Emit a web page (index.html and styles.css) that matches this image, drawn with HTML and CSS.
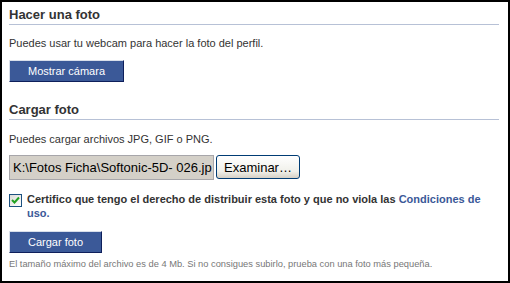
FILE: index.html
```html
<!DOCTYPE html>
<html lang="es">

<head>
	<title>Foto del perfil</title>
	<meta charset="utf-8"/>
	<link rel="stylesheet" href="styles.css">
</head>

<body>
	<div class="panel">
		<div class="section">
			<h2 class="section-title">Hacer una foto</h2>
			<p class="hint">Puedes usar tu webcam para hacer la foto del perfil.</p>
			<button class="fb-button">Mostrar cámara</button>
		</div>

		<div class="section upload">
			<h2 class="section-title">Cargar foto</h2>
			<p class="hint">Puedes cargar archivos JPG, GIF o PNG.</p>
			<div class="file-row">
				<span class="file-path">K:\Fotos Ficha\Softonic-5D- 026.jp</span>
				<button class="browse">Examinar…</button>
			</div>
			<label class="certify">
				<span class="checkbox">
					<svg width="9" height="9" viewBox="0 0 9 9"><path d="M1 4 L3.5 6.5 L8 1.5" fill="none" stroke="#21a121" stroke-width="2"/></svg>
				</span>
				<span>Certifico que tengo el derecho de distribuir esta foto y que no viola las <a href="#">Condiciones de uso.</a></span>
			</label>
			<button class="fb-button">Cargar foto</button>
			<p class="note">El tamaño máximo del archivo es de 4 Mb. Si no consigues subirlo, prueba con una foto más pequeña.</p>
		</div>
	</div>
</body>
</html>
```

FILE: styles.css
```css
html, body {
	margin: 0;
}

body {
	width: 510px;
	height: 283px;
	box-sizing: border-box;
	border: 2px solid black;
	background: white;
	font-family: Tahoma, "Liberation Sans", sans-serif;
	font-size: 11px;
	color: #333;
}

.panel {
	padding: 5px 9px 0 7px;
}

.section-title {
	margin: 0;
	font-size: 13px;
	line-height: 16px;
	padding-bottom: 1px;
	border-bottom: 1px solid #b7c1d6;
	color: #333;
}

.hint {
	margin: 11px 0 10px;
	line-height: 14px;
}

.fb-button {
	display: block;
	height: 22px;
	padding: 0 18px;
	font-family: inherit;
	font-size: 11px;
	color: white;
	background-color: #3b5998;
	border: 1px solid;
	border-color: #d9dfea #0e1f5b #0e1f5b #d9dfea;
}

.upload {
	margin-top: 20px;
}

.upload .hint {
	margin-top: 12px;
	margin-bottom: 9px;
}

.file-row {
	display: flex;
	gap: 2px;
	align-items: flex-start;
}

.file-path {
	width: 197px;
	height: 23px;
	padding: 0 3px;
	overflow: hidden;
	white-space: nowrap;
	line-height: 23px;
	font-family: Arial, "Liberation Sans", sans-serif;
	font-size: 13px;
	color: black;
	background: #d4d0c8;
	border: 1px solid #a7a6aa;
}

.browse {
	width: 84px;
	height: 24px;
	padding: 0;
	font-family: Arial, "Liberation Sans", sans-serif;
	font-size: 13px;
	color: black;
	border: 1px solid #003c74;
	border-radius: 3px;
	background: linear-gradient(#ffffff, #f0f0ea 70%, #d6d0c5);
}

.certify {
	display: flex;
	gap: 5px;
	margin: 12px 0 11px;
	line-height: 14px;
	font-weight: bold;
}

.certify a {
	color: #3b5998;
	text-decoration: none;
}

.checkbox {
	flex: none;
	width: 11px;
	height: 11px;
	margin-top: 2px;
	display: flex;
	align-items: center;
	justify-content: center;
	border: 1px solid #1c5180;
	background: linear-gradient(135deg, #dcdcd7, #ffffff);
}

.note {
	margin: 5px 0 0;
	font-size: 9.3px;
	line-height: 12px;
	color: #777;
}
```
